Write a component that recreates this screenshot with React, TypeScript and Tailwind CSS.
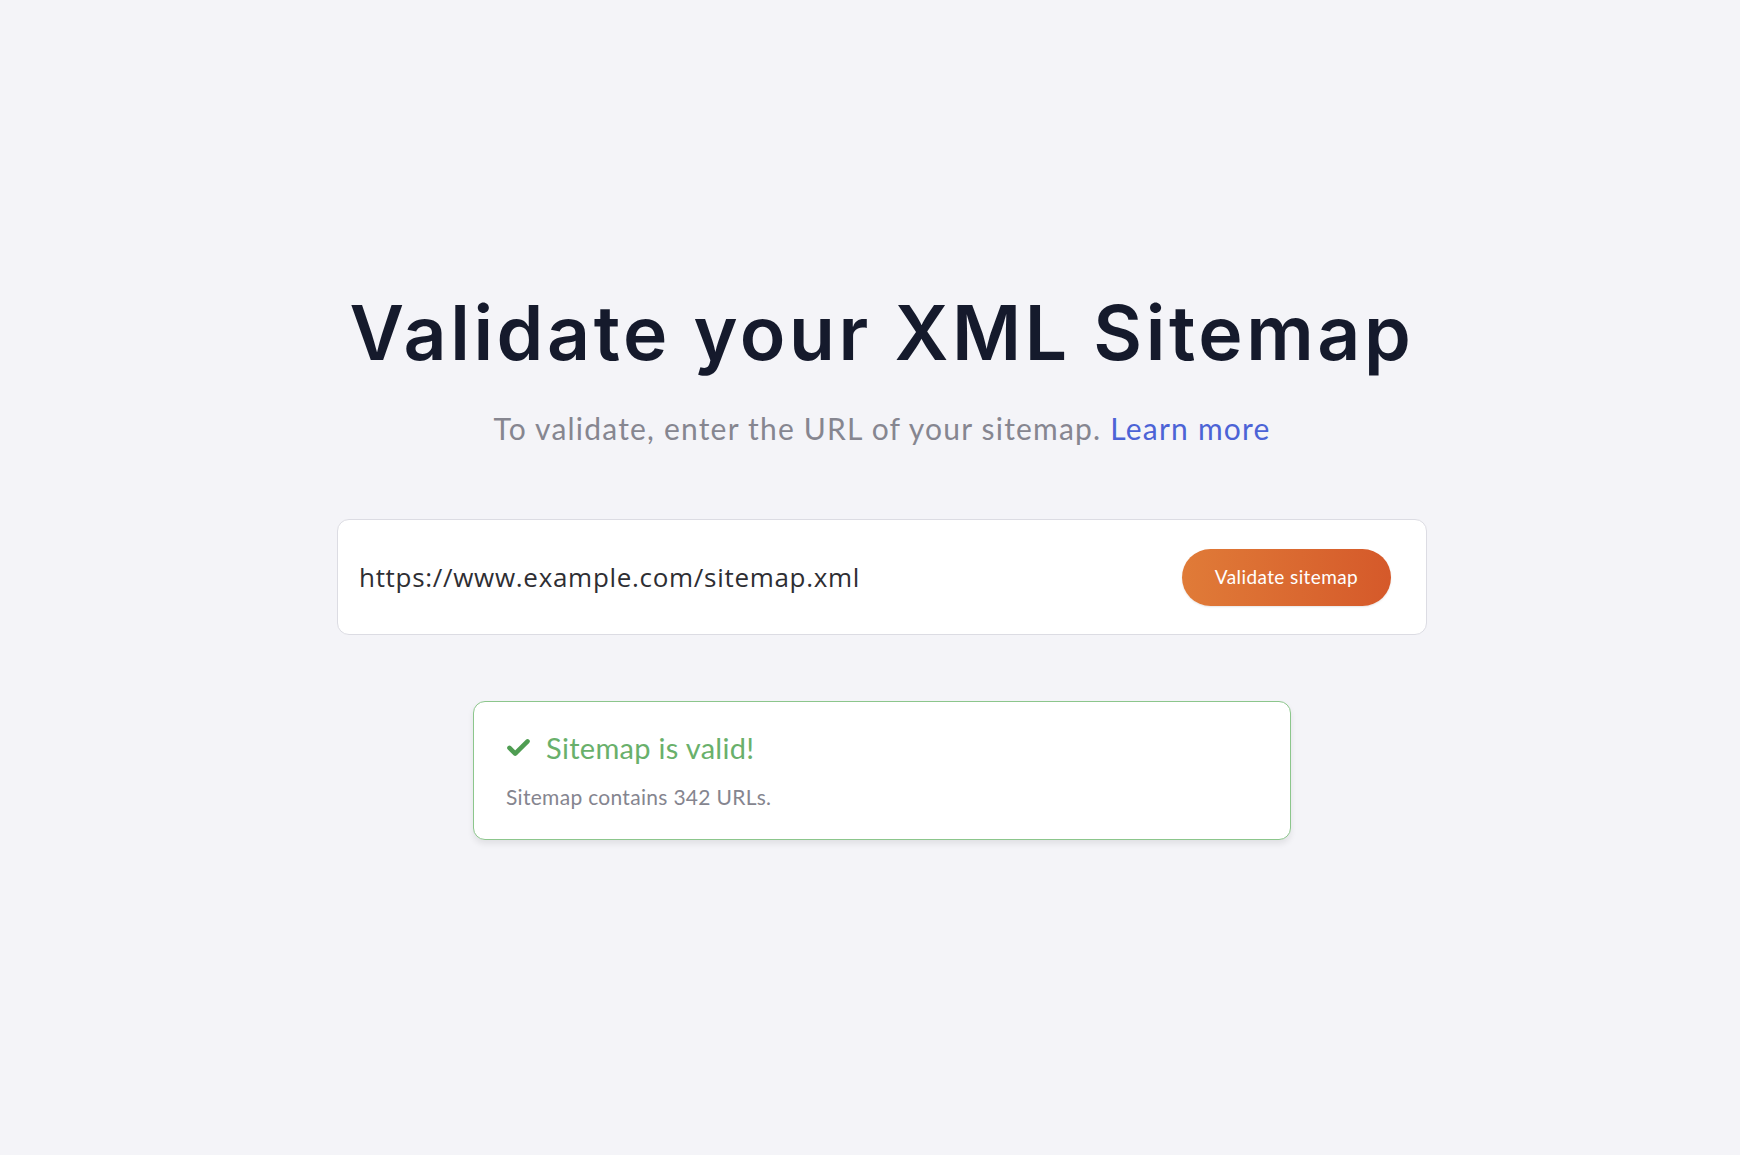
import { useState } from "react";

function CheckIcon() {
  return (
    <svg viewBox="0 0 26 20" className="h-[19px] w-[25px] shrink-0" fill="none">
      <path d="M3.5 10.5l6 6L22.5 3.5" stroke="#4f9d52" strokeWidth={4.8} strokeLinecap="round" strokeLinejoin="round" />
    </svg>
  );
}

export default function App() {
  const [url, setUrl] = useState("https://www.example.com/sitemap.xml");
  const urlCount = 342;

  return (
    <div className="min-h-screen w-full bg-[#f4f4f8]">
      <main className="flex flex-col items-center pt-[295px] pl-[24px]">
        <h1 className="font-['Inter',sans-serif] text-[75px] font-semibold leading-none tracking-[3.6px] text-[#151a2c]">
          Validate your XML Sitemap
        </h1>

        <p className="mt-[43px] font-['Lato',sans-serif] text-[30px] leading-none tracking-[1.2px] text-[#868690]">
          To validate, enter the URL of your sitemap.{" "}
          <a href="#" className="text-[#4c63d6]">
            Learn more
          </a>
        </p>

        {/* URL form */}
        <form
          onSubmit={(e) => e.preventDefault()}
          className="mt-[76px] flex h-[116px] w-[1090px] items-center rounded-[12px] border border-[#dcdce3] bg-white pl-[21px] pr-[35px]"
        >
          <input
            type="text"
            value={url}
            onChange={(e) => setUrl(e.target.value)}
            className="flex-1 bg-transparent font-['Open_Sans',sans-serif] text-[26px] tracking-[0.7px] text-[#2e2e33] outline-none"
          />
          <button
            type="submit"
            className="h-[57px] w-[209px] rounded-full bg-gradient-to-r from-[#e07b38] to-[#d5592a] font-['Lato',sans-serif] text-[19px] tracking-[0.4px] text-white shadow-[0_1px_2px_rgba(0,0,0,0.1)]"
          >
            Validate sitemap
          </button>
        </form>

        {/* Result */}
        <div className="mt-[66px] w-[818px] rounded-[12px] border-[1.5px] border-[#8cc68c] bg-white pb-[32px] pl-[32px] pt-[31px] shadow-[0_4px_6px_rgba(0,0,0,0.08)]">
          <div className="flex items-center gap-[15px]">
            <CheckIcon />
            <span className="font-['Lato',sans-serif] text-[29px] leading-none tracking-[0.3px] text-[#69b06b]">
              Sitemap is valid!
            </span>
          </div>
          <p className="mt-[24px] font-['Lato',sans-serif] text-[21px] leading-none tracking-[0.3px] text-[#85858f]">
            Sitemap contains {urlCount} URLs.
          </p>
        </div>
      </main>
    </div>
  );
}
